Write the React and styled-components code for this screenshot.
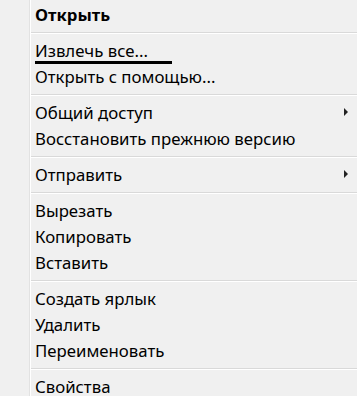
import React from "react";
import styled, { createGlobalStyle } from "styled-components";

const Global = createGlobalStyle`
  html, body { margin: 0; padding: 0; background: #f0f0f0; }
  body { font-family: "Noto Sans", "Open Sans", sans-serif; }
`;

const Menu = styled.div`
  position: relative;
  width: 357px;
  height: 396px;
  overflow: hidden;
  background: #f0f0f0;
  padding-top: 1px;
  box-sizing: border-box;
  &::before {
    content: "";
    position: absolute;
    top: 0;
    bottom: 0;
    left: 29px;
    width: 1px;
    background: #e2e2e2;
    box-shadow: 1px 0 0 #ffffff;
  }
`;

const Item = styled.div`
  position: relative;
  height: 26px;
  display: flex;
  align-items: center;
  padding-left: 35px;
  padding-right: 9px;
  font-size: 16.8px;
  color: #000;
  font-weight: ${(p) => (p.$bold ? 700 : 400)};
  white-space: nowrap;
  &::after {
    content: "";
    display: ${(p) => (p.$focus ? "block" : "none")};
    position: absolute;
    left: 35px;
    top: 24px;
    width: 137px;
    height: 3px;
    background: #000;
  }
`;

const Label = styled.span`
  flex: 1;
`;

const Arrow = styled.span`
  width: 0;
  height: 0;
  border-top: 4px solid transparent;
  border-bottom: 4px solid transparent;
  border-left: 4px solid #222;
  margin-left: 8px;
`;

const Separator = styled.div`
  height: 10px;
  display: flex;
  align-items: center;
  padding-left: 30px;
  &::before {
    content: "";
    flex: 1;
    height: 1px;
    background: #d9d9d9;
    box-shadow: 0 1px 0 #ffffff;
  }
`;

const groups = [
  [{ t: "Открыть", bold: true }],
  [{ t: "Извлечь все...", focus: true }, { t: "Открыть с помощью..." }],
  [{ t: "Общий доступ", sub: true }, { t: "Восстановить прежнюю версию" }],
  [{ t: "Отправить", sub: true }],
  [{ t: "Вырезать" }, { t: "Копировать" }, { t: "Вставить" }],
  [{ t: "Создать ярлык" }, { t: "Удалить" }, { t: "Переименовать" }],
  [{ t: "Свойства" }],
];

export default function App() {
  return (
    <>
      <Global />
      <Menu>
        {groups.map((g, gi) => (
          <React.Fragment key={gi}>
            {gi > 0 && <Separator />}
            {g.map((it) => (
              <Item key={it.t} $bold={it.bold} $focus={it.focus}>
                <Label>{it.t}</Label>
                {it.sub && <Arrow />}
              </Item>
            ))}
          </React.Fragment>
        ))}
      </Menu>
    </>
  );
}
